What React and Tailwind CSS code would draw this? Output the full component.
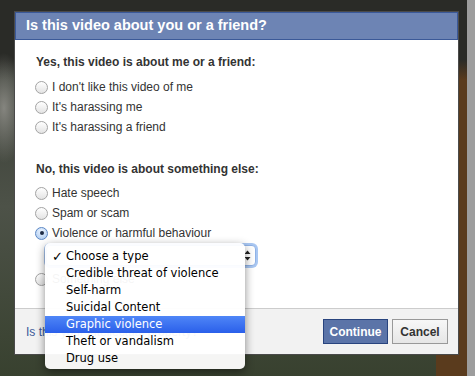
import React from 'react';

const Radio = ({ checked }) => (
  <span
    className={`w-[13px] h-[13px] rounded-full border shrink-0 flex items-center justify-center ${
      checked
        ? 'border-[#5b87c5] bg-[radial-gradient(circle_at_50%_30%,#eaf3ff,#a9c8ee)]'
        : 'border-[#a3a3a3] bg-[linear-gradient(to_bottom,#ffffff,#e3e3e3)]'
    }`}
  >
    {checked && <span className="w-[4px] h-[4px] rounded-full bg-[#1d2b45]" />}
  </span>
);

const Option = ({ label, checked }) => (
  <div className="h-[20px] flex items-center gap-[4px]">
    <Radio checked={checked} />
    <span className="text-[12px] text-[#333]">{label}</span>
  </div>
);

const types = [
  'Choose a type',
  'Credible threat of violence',
  'Self-harm',
  'Suicidal Content',
  'Graphic violence',
  'Theft or vandalism',
  'Drug use',
];

export default function App() {
  return (
    <div className="relative w-[475px] h-[376px] overflow-hidden flex font-['Liberation_Sans',Arial,sans-serif]">
      <div className="w-[467px] h-full pl-[14px] pt-[11px] bg-[radial-gradient(ellipse_22px_55px_at_4px_108px,#85857f,transparent),linear-gradient(to_bottom,#2a2b27_0,#2a2b27_60px,transparent_80px),linear-gradient(to_right,transparent_436px,#5a3b1d_436px),linear-gradient(to_bottom,#2f322c,#4d5248_55%,#38412f)]">
        <div className="w-[445px] border border-[#4a4a4a]">
          <div className="h-[28px] bg-[#6d84b4] border border-[#3b5998] pl-[10px] flex items-center">
            <h2 className="text-[14.5px] font-bold text-white">Is this video about you or a friend?</h2>
          </div>

          <div className="bg-white pl-[20px] pt-[15px] pb-[19px]">
            <p className="ml-[1px] text-[12px] leading-[14px] font-bold text-[#333]">
              Yes, this video is about me or a friend:
            </p>
            <div className="mt-[8px]">
              <Option label="I don't like this video of me" />
              <Option label="It's harassing me" />
              <Option label="It's harassing a friend" />
            </div>

            <p className="mt-[25px] ml-[1px] text-[12px] leading-[14px] font-bold text-[#333]">
              No, this video is about something else:
            </p>
            <div className="mt-[7px]">
              <Option label="Hate speech" />
              <Option label="Spam or scam" />
              <Option label="Violence or harmful behaviour" checked />
            </div>

            <div className="mt-[2px] ml-[11px] w-[210px] h-[21px] rounded-[4px] border border-[#8fb2e6] shadow-[0_0_0_2px_#a9c7f2] bg-white flex items-center justify-end pr-[4px]">
              <svg width="7" height="11" viewBox="0 0 7 11">
                <path d="M3.5 0.5 L6.5 4 L0.5 4 Z" fill="#222" />
                <path d="M3.5 10.5 L6.5 7 L0.5 7 Z" fill="#222" />
              </svg>
            </div>

            <div className="mt-[3px]">
              <Option label="Something else" />
            </div>
          </div>

          <div className="h-[46px] bg-[#f2f2f2] border-t border-[#cccccc] flex items-center justify-between pl-[11px] pr-[10px]">
            <a className="text-[12px] text-[#3b5998]">Is this your intellectual property?</a>
            <div className="flex gap-[4px]">
              <button className="w-[65px] h-[25px] bg-[#5b74a8] border border-[#29447e] text-white text-[12px] font-bold">
                Continue
              </button>
              <button className="w-[56px] h-[25px] bg-[linear-gradient(to_bottom,#f7f7f7,#e6e6e6)] border border-[#999] text-[#333] text-[12px] font-bold">
                Cancel
              </button>
            </div>
          </div>
        </div>
      </div>
      <div className="w-[8px] h-full bg-[#9d9d9d]" />

      {/* open select menu */}
      <div className="absolute left-[45px] top-[243px] w-[200px] h-[126px] rounded-[5px] bg-white/95 shadow-[0_3px_10px_rgba(0,0,0,0.45)] pt-[5px] font-['DejaVu_Sans',sans-serif]">
        {types.map((t, i) => (
          <div
            key={t}
            className={`h-[17px] flex items-center pl-[7px] text-[11.5px] ${
              i === 4 ? 'bg-[linear-gradient(to_bottom,#4f86f7,#2a5fea)] text-white' : 'text-black'
            }`}
          >
            <span className="w-[14px] text-[13px] font-bold">{i === 0 ? '✓' : ''}</span>
            {t}
          </div>
        ))}
      </div>
    </div>
  );
}
